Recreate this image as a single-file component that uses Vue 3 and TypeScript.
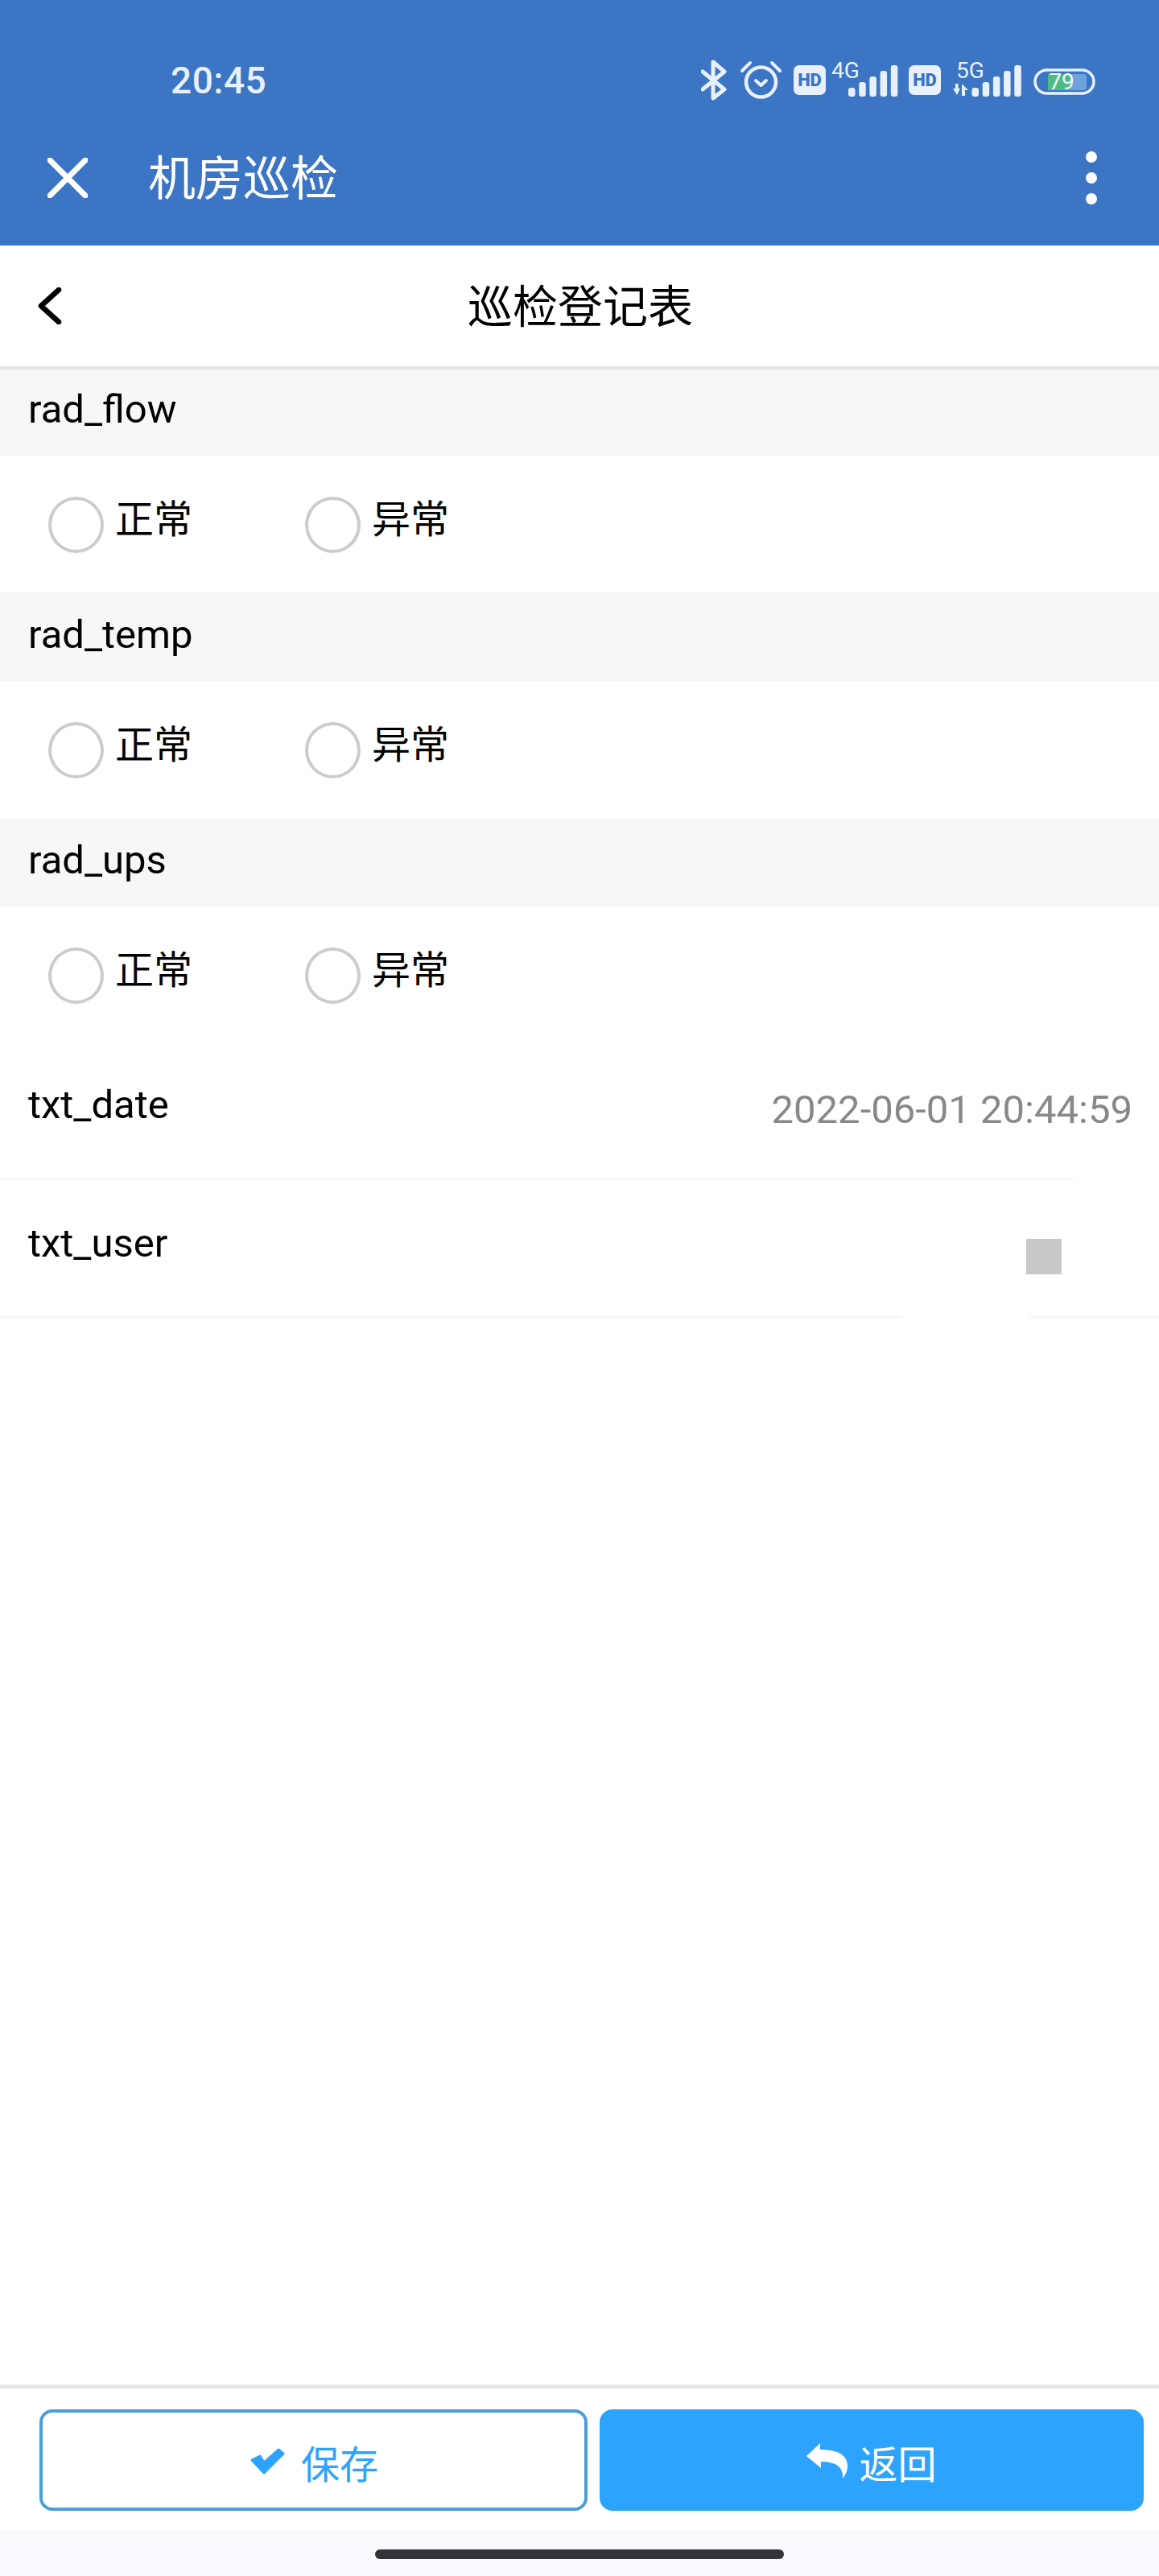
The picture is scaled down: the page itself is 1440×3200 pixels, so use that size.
<script setup lang="ts">
const sections = ['rad_flow', 'rad_temp', 'rad_ups'];
const options = ['正常', '异常'];
const barHeights = [11, 18, 25, 32, 39];
</script>

<template>
  <div class="page">
    <header class="app-header">
      <div class="status-bar">
        <span class="time">20:45</span>
        <svg class="status-icons" viewBox="871 70 490 60" width="490" height="60">
          <!-- bluetooth -->
          <polyline points="873,89 900,111 886,122 886,77 900,89 873,111" fill="none" stroke="#e8f1fb" stroke-width="5" stroke-linejoin="round" stroke-linecap="round" />
          <!-- alarm -->
          <circle cx="945.5" cy="102" r="18.5" fill="none" stroke="#e8f1fb" stroke-width="4.5" />
          <path d="M922 88 L932 78 M959 78 L969 88" stroke="#e8f1fb" stroke-width="4" stroke-linecap="round" />
          <polyline points="939,100 945.5,106 952,100" fill="none" stroke="#e8f1fb" stroke-width="4" stroke-linecap="round" stroke-linejoin="round" />
          <!-- sim 1 -->
          <rect x="986" y="81" width="40" height="37" rx="7" fill="#e8f1fb" />
          <text x="1006" y="107" class="hd" text-anchor="middle">HD</text>
          <text x="1033" y="97" class="net">4G</text>
          <rect v-for="(h, i) in barHeights" :key="'a' + i" :x="1054 + i * 13.2" :y="120 - h" width="8.5" :height="h" rx="3" fill="#e8f1fb" />
          <!-- sim 2 -->
          <rect x="1129" y="81" width="40" height="37" rx="7" fill="#e8f1fb" />
          <text x="1149" y="107" class="hd" text-anchor="middle">HD</text>
          <text x="1188" y="97" class="net">5G</text>
          <path d="M1184 110 H1187 V104 H1190.5 V110 H1193 L1189 118 Z M1195 119 V104 L1203 112 H1199 V119 Z" fill="#e8f1fb" />
          <rect v-for="(h, i) in barHeights" :key="'b' + i" :x="1207.5 + i * 13.2" :y="120 - h" width="8.5" :height="h" rx="3" fill="#e8f1fb" />
          <!-- battery -->
          <rect x="1302" y="92" width="48" height="20" rx="4" fill="#6da3dc" />
          <rect x="1302" y="92" width="28" height="20" fill="#4fb987" />
          <rect x="1286" y="87" width="73" height="29" rx="14.5" fill="none" stroke="#e8f1fb" stroke-width="3.5" />
          <text x="1319" y="111" class="batt" text-anchor="middle">79</text>
        </svg>
      </div>
      <div class="title-bar">
        <svg class="close-icon" viewBox="0 0 50 50" width="50" height="50">
          <path d="M3 3 L47 47 M47 3 L3 47" stroke="#fff" stroke-width="7" stroke-linecap="round" />
        </svg>
        <span class="app-title">机房巡检</span>
        <div class="more">
          <i></i>
          <i></i>
          <i></i>
        </div>
      </div>
    </header>

    <div class="sub-nav">
      <svg class="back-icon" viewBox="0 0 30 46" width="30" height="46">
        <polyline points="26,3 4,23 26,43" fill="none" stroke="#000" stroke-width="6.5" stroke-linecap="round" stroke-linejoin="round" />
      </svg>
      <h1 class="form-title">巡检登记表</h1>
      <span></span>
    </div>

    <section v-for="name in sections" :key="name" class="group">
      <div class="group-head">{{ name }}</div>
      <div class="radio-row">
        <label v-for="opt in options" :key="opt" class="radio">
          <span class="circle"></span>
          <span class="radio-text">{{ opt }}</span>
        </label>
      </div>
    </section>

    <div class="field field-date">
      <span>txt_date</span>
      <span class="field-value">2022-06-01 20:44:59</span>
    </div>
    <div class="field field-user">
      <span>txt_user</span>
      <span class="field-mark"></span>
    </div>

    <div class="spacer"></div>

    <footer class="footer">
      <div class="footer-line"></div>
      <div class="actions">
        <button class="btn btn-save">
          <svg viewBox="0 0 43 33" width="43" height="33">
            <path d="M2 15 L12 10 L17 18 L35 2 L41 7 L17 31 Z" fill="#2ca3fd" stroke="#2ca3fd" stroke-width="3" stroke-linejoin="round" />
          </svg>
          <span>保存</span>
        </button>
        <button class="btn btn-back">
          <svg viewBox="0 0 51 45" width="51" height="45">
            <path d="M0 16 L17 0 V8 C38 8 51 14 51 29 C51 35 48 40 45 44 C46 32 40 23 18 23 V31 Z" fill="#fff" />
          </svg>
          <span>返回</span>
        </button>
      </div>
      <div class="gesture">
        <div class="home-bar"></div>
      </div>
    </footer>
  </div>
</template>

<style scoped>
.page {
  min-height: 3200px;
  display: flex;
  flex-direction: column;
  background: #fff;
  color: #000;
  font-family: Roboto, "Noto Sans CJK SC", sans-serif;
  font-size: 49px;
  line-height: 56px;
}

.app-header {
  height: 305px;
  background: #3b75c4;
}

.status-bar {
  height: 60px;
  padding: 70px 79px 0 212px;
  display: flex;
  justify-content: space-between;
  align-items: center;
}

.time {
  color: #e8f1fb;
  font-size: 46px;
  font-weight: 500;
  letter-spacing: 0.5px;
}

.hd {
  font-family: Roboto, sans-serif;
  font-size: 22px;
  font-weight: 900;
  fill: #3b75c4;
}

.net {
  font-family: Roboto, sans-serif;
  font-size: 28px;
  fill: #e8f1fb;
}

.batt {
  font-family: Roboto, sans-serif;
  font-size: 28px;
  fill: #f4fbf8;
}

.title-bar {
  height: 168px;
  padding: 7px 77px 0 59px;
  display: flex;
  align-items: center;
}

.app-title {
  margin-left: 75px;
  flex: 1;
  padding-top: 3px;
  color: #fff;
  font-size: 59px;
  line-height: 66px;
}

.more {
  display: flex;
  flex-direction: column;
  gap: 12px;
}

.more i {
  display: block;
  width: 14px;
  height: 14px;
  border-radius: 50%;
  background: #fff;
}

.sub-nav {
  position: relative;
  z-index: 1;
  height: 150px;
  margin-bottom: -3px;
  padding-left: 47px;
  display: grid;
  grid-template-columns: 1fr auto 1fr;
  align-items: center;
  background: #fff;
  border-bottom: 4px solid #e5e5e5;
}

.form-title {
  margin: 4px 45px 0 0;
  font-size: 56px;
  font-weight: 400;
  line-height: 64px;
}

.group-head {
  height: 86px;
  padding: 25px 0 0 35px;
  background: #f7f7f7;
}

.radio-row {
  height: 169px;
  padding-left: 60px;
  display: flex;
  align-items: center;
}

.radio {
  width: 319px;
  display: flex;
  align-items: center;
  gap: 14px;
}

.circle {
  width: 61px;
  height: 62px;
  border: 4px solid #ccc;
  border-radius: 50%;
}

.radio-text {
  margin-bottom: 12px;
  font-size: 48px;
}

.field {
  height: 118px;
  padding: 49px 0 3px 35px;
  display: flex;
  justify-content: space-between;
  align-items: flex-start;
}

.field-date {
  padding-right: 33px;
  background: linear-gradient(90deg, #f6f6f6 1334px, transparent 1334px) left bottom / 100% 3px no-repeat;
}

.field-user {
  padding-top: 51px;
  padding-right: 121px;
  background: linear-gradient(90deg, #f6f6f6 1120px, transparent 1120px, transparent 1280px, #f6f6f6 1280px) left bottom / 100% 3px no-repeat;
}

.field-value {
  margin-top: 6px;
  color: #888;
}

.field-mark {
  width: 44px;
  height: 44px;
  margin-top: 22px;
  background: #c8c8c8;
}

.spacer {
  flex: 1;
}

.footer-line {
  height: 5px;
  background: linear-gradient(#efefef, #dedede);
}

.actions {
  padding: 26px 19px 24px 49px;
  display: grid;
  grid-template-columns: 681px 676px;
  gap: 15px;
}

.btn {
  height: 126px;
  padding: 3px 0 0;
  display: flex;
  justify-content: center;
  align-items: center;
  gap: 20px;
  border-radius: 16px;
  font-family: inherit;
  font-size: 48px;
}

.btn-save {
  padding-left: 2px;
  background: #fff;
  border: 4px solid #4a9fd8;
  color: #2ca3fd;
}

.btn-back {
  background: #2ca3fd;
  border: none;
  color: #fff;
  gap: 14px;
}

.gesture {
  height: 57px;
  padding-top: 24px;
  box-sizing: border-box;
  background: #f9fafd;
}

.home-bar {
  width: 508px;
  height: 12px;
  margin: 0 auto;
  border-radius: 6px;
  background: #333437;
}
</style>

<style>
html,
body {
  margin: 0;
  background: #fff;
}
</style>
